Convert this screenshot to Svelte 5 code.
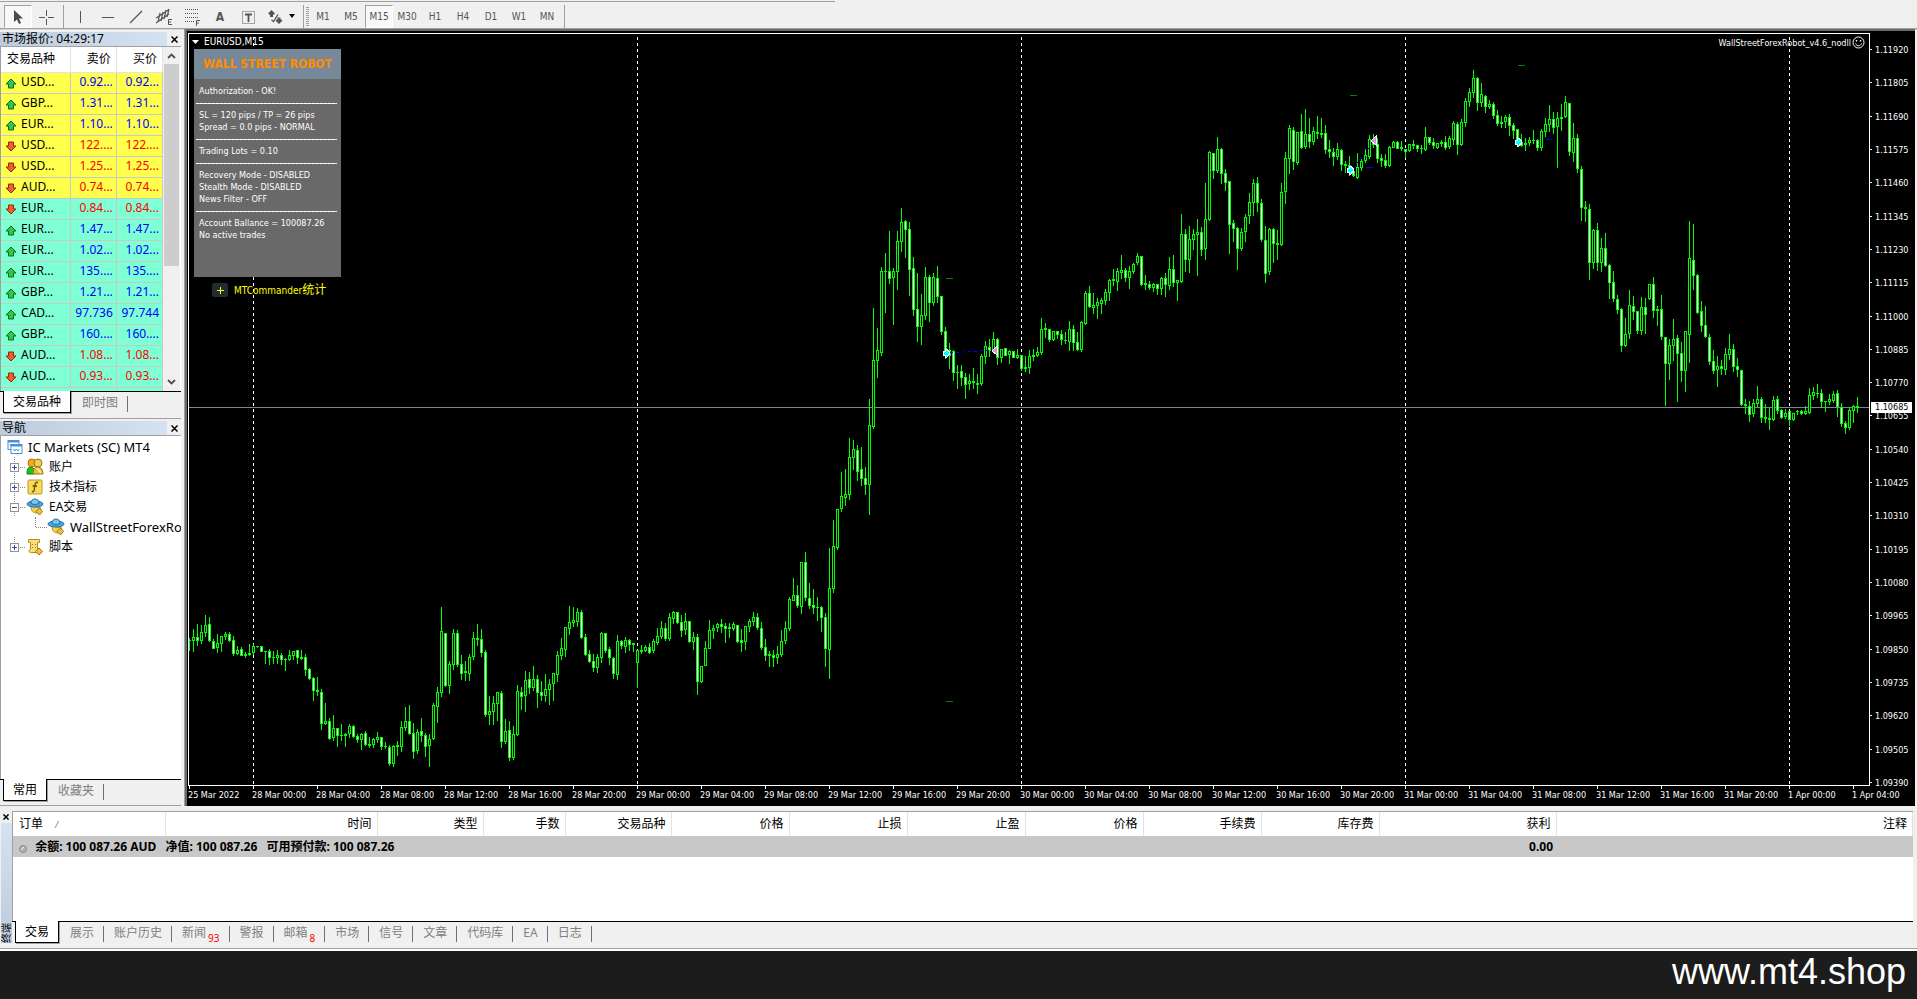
<script lang="ts">
  const timeframes = ['M1', 'M5', 'M15', 'M30', 'H1', 'H4', 'D1', 'W1', 'MN'];

  type Quote = { symbol: string; bid: string; ask: string; up: boolean; group: string };

  const quotes: Quote[] = [
    { symbol: 'USD...', bid: '0.92...', ask: '0.92...', up: true, group: 'yellow' },
    { symbol: 'GBP...', bid: '1.31...', ask: '1.31...', up: true, group: 'yellow' },
    { symbol: 'EUR...', bid: '1.10...', ask: '1.10...', up: true, group: 'yellow' },
    { symbol: 'USD...', bid: '122....', ask: '122....', up: false, group: 'yellow' },
    { symbol: 'USD...', bid: '1.25...', ask: '1.25...', up: false, group: 'yellow' },
    { symbol: 'AUD...', bid: '0.74...', ask: '0.74...', up: false, group: 'yellow' },
    { symbol: 'EUR...', bid: '0.84...', ask: '0.84...', up: false, group: 'aqua' },
    { symbol: 'EUR...', bid: '1.47...', ask: '1.47...', up: true, group: 'aqua' },
    { symbol: 'EUR...', bid: '1.02...', ask: '1.02...', up: true, group: 'aqua' },
    { symbol: 'EUR...', bid: '135....', ask: '135....', up: true, group: 'aqua' },
    { symbol: 'GBP...', bid: '1.21...', ask: '1.21...', up: true, group: 'aqua' },
    { symbol: 'CAD...', bid: '97.736', ask: '97.744', up: true, group: 'aqua' },
    { symbol: 'GBP...', bid: '160....', ask: '160....', up: true, group: 'aqua' },
    { symbol: 'AUD...', bid: '1.08...', ask: '1.08...', up: false, group: 'aqua' },
    { symbol: 'AUD...', bid: '0.93...', ask: '0.93...', up: false, group: 'aqua' }
  ];

  const treeItems = [
    { label: '账户', icon: 'accounts', box: '+' },
    { label: '技术指标', icon: 'indicator', box: '+' },
    { label: 'EA交易', icon: 'expert', box: '-' },
    { label: 'WallStreetForexRobot', icon: 'expert', box: '' },
    { label: '脚本', icon: 'script', box: '+' }
  ];

  // '-' draws a dashed rule between the groups
  const robotLines = [
    'Authorization - OK!',
    '-',
    'SL = 120 pips / TP = 26 pips',
    'Spread = 0.0 pips - NORMAL',
    '-',
    'Trading Lots = 0.10',
    '-',
    'Recovery Mode - DISABLED',
    'Stealth Mode - DISABLED',
    'News Filter - OFF',
    '-',
    'Account Ballance = 100087.26',
    'No active trades'
  ];

  const columns = ['订单', '时间', '类型', '手数', '交易品种', '价格', '止损', '止盈', '价格', '手续费', '库存费', '获利', '注释'];
  const columnWidths = [152, 212, 106, 82, 106, 118, 118, 118, 118, 118, 118, 177];

  const terminalTabs = [
    { label: '交易' },
    { label: '展示' },
    { label: '账户历史' },
    { label: '新闻', count: 93 },
    { label: '警报' },
    { label: '邮箱', count: 8 },
    { label: '市场' },
    { label: '信号' },
    { label: '文章' },
    { label: '代码库' },
    { label: 'EA' },
    { label: '日志' }
  ];

  const hours = ['00:00', '04:00', '08:00', '12:00', '16:00', '20:00'];
  const times = [
    '25 Mar 2022',
    ...['28 Mar', '29 Mar', '30 Mar', '31 Mar'].flatMap((day) => hours.map((hour) => `${day} ${hour}`)),
    '1 Apr 00:00',
    '1 Apr 04:00'
  ];

  const prices = Array.from({ length: 23 }, (_, n) => ((111920 - 115 * n) / 100000).toFixed(5));

  // Every bar is high, open, close, low, measured down from the top of the window
  const bars = `
638 640 640 650;629 640 637 651;624 637 640 645;625 640 632 643;615 632 625 636;617 624 640 641
639 641 648 648;634 647 643 652;636 643 636 651;632 636 634 639;632 634 640 641;636 640 653 655
646 653 650 654;647 649 655 655;652 655 654 657;644 654 653 655;644 652 646 654;646 646 646 647
646 646 651 651;651 651 651 663;649 651 657 664;651 657 657 663;650 657 655 663;653 655 659 664
658 659 659 670;650 659 655 660;651 655 651 659;650 650 657 663;650 657 658 659;654 657 669 675
668 669 678 679;677 678 690 700;677 690 691 695;689 692 723 729;703 723 721 724;718 721 738 739
715 737 728 740;728 728 735 746;724 735 735 740;733 735 734 746;724 733 726 737;725 726 736 737
734 736 739 742;733 739 734 749;731 733 744 745;737 744 745 747;738 744 739 747;732 739 737 742
737 737 746 749;742 746 746 748;745 747 763 765;745 763 746 766;741 746 745 755;721 746 727 751
707 727 721 730;705 721 733 734;723 733 751 758;729 750 732 753;718 731 735 741;733 735 746 756
734 745 739 766;703 738 705 739;687 706 692 722;607 692 631 696;633 633 685 686;661 685 664 693
629 664 633 669;630 633 664 666;655 664 673 679;661 671 672 680;654 673 657 680;632 656 638 659
624 638 639 645;629 639 652 656;650 652 714 716;696 714 711 724;696 711 703 724;692 703 692 720
691 693 741 747;719 741 731 743;721 730 757 760;726 757 734 759;685 734 691 735;687 692 696 709
671 695 680 711;672 679 687 693;666 687 679 690;675 679 692 707;681 692 695 700;674 695 689 701
679 689 684 704;673 683 673 700;651 674 655 681;638 655 648 659;627 649 627 656;606 628 622 634
607 622 620 626;608 621 612 626;610 612 637 638;634 637 654 655;650 654 661 662;654 661 667 671
654 667 657 672;632 657 633 662;633 633 650 652;647 649 657 664;657 658 673 678;635 674 641 679
640 641 645 648;637 646 640 652;639 640 644 650;643 643 644 651;650 662 650 687;645 650 651 653
645 650 647 651;643 647 652 653;639 650 641 652;628 642 636 644;621 636 628 638;623 628 638 640
613 638 617 640;611 618 612 623;612 612 622 623;615 622 630 636;613 629 621 634;621 621 641 642
632 641 637 649;634 637 681 694;666 681 666 682;641 665 648 665;620 648 630 648;625 630 628 638
623 627 624 631;619 624 626 632;623 626 628 642;623 628 627 637;622 628 624 630;625 625 641 642
629 640 642 651;626 641 626 649;619 626 621 631;612 621 617 625;613 617 627 629;622 628 647 649
639 647 655 660;651 654 655 666;650 655 657 666;646 657 654 663;630 654 641 656;621 640 628 643
597 628 599 630;578 600 595 600;585 595 605 607;562 606 562 613;552 562 597 600;583 598 605 608
589 605 607 613;597 607 607 620;606 607 617 631;613 617 648 666;548 649 588 678;520 588 546 592
509 547 509 549;472 508 496 511;469 497 494 505;438 494 457 499;440 457 449 469;445 450 471 480
447 469 478 485;467 478 484 494;399 484 425 514;308 426 360 428;328 360 350 377;267 352 271 355
253 271 271 312;231 271 278 283;268 277 271 324;231 271 241 289;208 241 222 251;220 221 229 257
222 229 269 295;257 268 309 315;273 309 326 341;294 326 315 344;267 315 277 319;275 277 302 321
273 302 277 305;266 278 296 302;296 296 331 334;327 331 355 358;343 355 350 368;350 351 372 380
365 372 372 388;365 371 377 385;373 377 384 398;374 383 381 389;368 381 382 388;374 383 384 393
354 383 356 385;341 356 346 363;339 347 350 356;332 350 339 352;338 339 357 364;349 357 349 362
348 348 355 355;350 354 351 363;351 351 357 357;349 357 355 358;355 355 368 370;356 368 367 371
350 367 356 373;349 356 355 360;347 355 352 356;318 352 329 354;323 328 329 337;329 329 339 341
331 339 331 340;331 331 334 338;330 334 339 344;332 340 340 343;321 341 329 350;325 329 342 350
332 342 349 350;321 349 322 351;291 323 293 324;286 293 306 307;293 307 305 313;298 305 302 318
298 303 300 313;289 300 292 304;279 292 280 300;269 280 279 285;268 281 271 290;255 272 270 278
268 270 277 281;266 277 271 288;263 271 264 273;253 262 256 264;256 256 284 285;275 283 284 289
281 284 287 289;283 287 284 291;284 284 288 294;277 288 278 294;273 278 284 296;257 285 269 289
255 269 282 286;280 282 280 300;214 281 234 282;229 234 259 271;226 259 239 272;229 239 234 249
219 234 232 275;227 232 249 255;183 248 219 259;151 219 152 220;153 153 170 178;137 170 149 172
148 149 173 183;169 173 182 190;181 181 224 253;220 223 228 241;227 228 248 269;228 248 232 250
214 231 217 241;193 215 202 223;179 202 183 215;177 183 202 211;199 203 239 241;226 240 273 282
228 271 229 274;228 229 243 262;230 243 244 259;183 244 192 245;152 191 158 203;125 158 128 173
127 130 161 169;132 162 132 164;114 131 147 148;109 146 134 148;118 134 141 147;127 141 131 144
116 132 133 138;118 133 134 137;125 133 149 153;140 149 151 157;148 152 156 165;143 156 149 159
149 150 164 170;161 164 165 172;156 165 171 175;166 171 175 176;153 177 167 178;159 167 161 170
149 160 155 162;135 156 139 158;134 139 144 147;138 144 158 162;154 158 160 166;154 160 165 167
146 165 147 166;141 147 142 147;141 142 148 148;141 147 148 150;149 149 151 157;144 150 144 151
140 144 145 148;145 145 148 151;145 148 148 153;127 149 137 150;137 137 142 144;138 142 145 148
143 147 143 148;140 143 142 146;136 142 147 149;136 146 138 148;121 139 123 144;122 124 144 154
119 144 122 145;98 122 101 126;88 101 92 106;70 92 78 97;77 78 102 110;83 102 94 106
95 96 106 112;100 106 104 108;102 104 115 118;110 115 123 125;116 122 123 127;115 121 117 127
114 117 125 135;123 125 130 138;129 129 144 146;134 142 145 146;138 144 143 150;137 142 140 145
130 140 140 143;139 140 147 150;129 147 131 150;118 131 124 136;105 124 119 131;112 119 127 133
112 126 118 167;104 118 117 130;96 116 102 117;103 103 151 155;123 152 138 161;134 138 168 172
166 169 207 220;201 207 208 221;204 209 262 279;229 262 230 268;223 230 262 270;238 262 248 271
233 248 265 266;264 265 282 298;271 282 298 301;295 299 309 313;308 309 345 351;318 345 334 346
290 333 305 338;296 306 311 319;311 311 330 333;297 330 307 334;298 307 314 333;284 298 284 299
277 284 310 317;306 309 310 325;295 309 336 339;337 337 363 405;339 363 345 379;319 345 339 360
335 338 353 401;342 353 370 381;331 370 331 391;221 334 258 362;224 260 275 289;274 275 312 313
301 311 325 331;306 325 336 337;334 337 361 364;350 361 370 373;356 369 366 386;360 366 368 374
348 369 354 374;334 354 349 359;344 349 366 371;358 366 369 376;370 370 404 405;399 404 405 413
401 406 414 421;399 413 403 416;386 403 399 406;397 399 417 422;404 417 418 422;408 418 419 429
396 419 400 420;396 399 410 413;409 410 417 418;409 416 413 418;411 411 419 425;413 419 413 420
410 411 411 414;410 411 413 414;406 413 411 414;388 412 395 413;387 395 392 399;384 393 393 397
389 393 401 407;401 401 401 411;394 401 399 404;391 400 394 402;390 393 406 416;403 407 423 426
421 423 427 433;407 427 410 429;405 410 406 422;397 406 407 412`
    .trim()
    .split(/[;\n]/)
    .map((bar) => bar.split(' ').map(Number));

  const BAR_STEP = 4;
  const PLOT_TOP = 34;

  let outline = '';
  let bullFill = '';
  let bearFill = '';

  bars.forEach(([high, open, close, low], i) => {
    const x = i * BAR_STEP;
    const top = Math.min(open, close) - PLOT_TOP;
    const height = Math.abs(open - close) + 1;
    outline += `M${x} ${high - PLOT_TOP}h1v${low - high + 1}h-1z`;
    outline += `M${x - 1} ${top}h3v${height}h-3z`;
    if (height > 2) {
      const inner = `M${x} ${top + 1}h1v${height - 2}h-1z`;
      if (close > open) bearFill += inner;
      else bullFill += inner;
    }
  });

  const daySeparators = [64, 448, 832, 1216, 1600];
  const buys = [[757, 319], [1161, 136], [1329, 108]];
  const sells = [[806, 316], [1185, 106]];
  const targets = [[757, 244], [1161, 61], [1329, 31], [757, 667]];
  const stops = [[1177, 133], [1357, 105]];
</script>

{#snippet treeIcon(name: string)}
  <svg class="tree-icon" width="18" height="18" viewBox="0 0 18 18" aria-hidden="true">
    {#if name === 'accounts'}
      <path d="M1 16c0-5 1-7 4-7 2 0 3 2 3 4v3z" fill="#18c818" stroke="#0c7c10" />
      <circle cx="6" cy="5" r="4" fill="#f5a81c" stroke="#a8730c" />
      <path d="M7 16c0-5 2-7 5-7s5 3 5 7z" fill="#e3bf3a" stroke="#96760e" />
      <circle cx="12" cy="5" r="4" fill="#edcf55" stroke="#96760e" />
      <path d="M11 10l4 5" stroke="#fff3b0" stroke-width="1.5" />
    {:else if name === 'indicator'}
      <rect x="2" y="2" width="14" height="14" rx="1" fill="#f7d95c" stroke="#c09a20" />
      <path d="M12 4.500c-2-.8-2.700.4-3 2.500l-.8 5c-.3 1.700-1 2-2.200 1.500M6.500 8H11" fill="none" stroke="#6b5200" stroke-width="1.400" />
    {:else if name === 'script'}
      <path d="M2.500 1.500h11v3h-2v7h2v3h-9c-2 0-2-3 0-3v-7h-2z" fill="#f7dd78" stroke="#b48f1e" />
      <path d="M6 6.500h1M9 6.500h1M6 9.500h1M9 9.500h1" stroke="#a07f1a" />
      <path d="M13 10l3.500 3.500L13 17l-3.500-3.500z" fill="#efc23c" stroke="#9c7410" />
    {:else}
      <path d="M5 8c0 5 2 7 6 7l4-5z" fill="#f3cf52" stroke="#b8901e" />
      <ellipse cx="9" cy="6" rx="8" ry="3" fill="#4ba7dc" stroke="#1e6fa6" />
      <path d="M5 5.500c0-3 1.500-4.500 4-4.500s4 1.500 4 4.500c-2 1.200-6 1.200-8 0z" fill="#7cc6ee" stroke="#1e6fa6" />
      <path d="M13.500 10l3 3.500-3 3.500-3.500-3.500z" fill="#efc23c" stroke="#9c7410" />
    {/if}
  </svg>
{/snippet}

<div class="app">
  <header class="toolbar">
    <button class="tool active" aria-label="Cursor">
      <svg width="18" height="18" viewBox="0 0 18 18"><path d="M5 2v12l3-2.500L10 16l2-1-2-4.500h4z" fill="#4a4a4a" /></svg>
    </button>
    <button class="tool" aria-label="Crosshair">
      <svg width="18" height="18" viewBox="0 0 18 18"><path d="M9.500 2v6M9.500 11v6M2 9.500h6M11 9.500h6" stroke="#555" /></svg>
    </button>
    <span class="separator"></span>
    <button class="tool" aria-label="Vertical line">
      <svg width="18" height="18" viewBox="0 0 18 18"><path d="M9.500 3v12" stroke="#555" /></svg>
    </button>
    <button class="tool" aria-label="Horizontal line">
      <svg width="18" height="18" viewBox="0 0 18 18"><path d="M3 9.500h12" stroke="#555" /></svg>
    </button>
    <button class="tool" aria-label="Trendline">
      <svg width="18" height="18" viewBox="0 0 18 18"><path d="M3 15L15 3" stroke="#555" stroke-width="1.200" /></svg>
    </button>
    <button class="tool" aria-label="Equidistant channel">
      <svg width="18" height="18" viewBox="0 0 18 18" fill="none" stroke="#555">
        <path d="M1 10L14 1.500M1 15L14 6M5 5L3 14M8 4L6 13M11 2L9 11M14 1l-2 8" stroke-width="1.200" />
        <path d="M17 11.500h-3.500v5H17M13.500 14H16" />
      </svg>
    </button>
    <button class="tool" aria-label="Fibonacci retracement">
      <svg width="18" height="18" viewBox="0 0 18 18" fill="none" stroke="#555">
        <path d="M2 1.500h14M2 5.500h14M2 9.500h14M2 13.500h9" stroke-dasharray="1 1" />
        <path d="M17 12.500h-3.500V18M13.500 15H16" />
      </svg>
    </button>
    <button class="tool letter" aria-label="Text">A</button>
    <button class="tool" aria-label="Text label">
      <svg width="18" height="18" viewBox="0 0 18 18" fill="none" stroke="#555">
        <rect x="3.500" y="3.500" width="12" height="12" stroke-dasharray="1 1" />
        <path d="M6 6.500h7M9.500 6v8" stroke-width="1.800" />
      </svg>
    </button>
    <button class="tool wide" aria-label="Arrows">
      <svg width="18" height="18" viewBox="0 0 18 18">
        <path d="M5.500 2L9 5.500 7 7v2H4V7L2 5.500zM13 16l-3.500-3.500 2-1.500V9.500h3V11l2 1.500z" fill="#555" />
        <path d="M5.500 12l2 1.500L12 6.500" fill="none" stroke="#555" stroke-width="1.300" />
      </svg>
      <svg width="8" height="5" viewBox="0 0 8 5"><path d="M1 0h6L4 4z" fill="#000" /></svg>
    </button>
    <span class="separator"></span>
    <span class="grip"></span>
    {#each timeframes as frame}
      <button class="tool" class:active={frame === 'M15'}>{frame}</button>
    {/each}
    <span class="separator"></span>
  </header>

  <div class="workspace">
    <aside class="sidebar">
      <section class="market">
        <div class="title-bar">
          <h2>市场报价: 04:29:17</h2>
          <button class="close" aria-label="Close market watch">
            <svg width="7" height="7" viewBox="0 0 7 7"><path d="M.5.5l6 6M6.500.5l-6 6" stroke="#000" stroke-width="1.500" /></svg>
          </button>
        </div>
        <div class="market-body">
          <table class="quotes">
            <thead>
              <tr><th>交易品种</th><th>卖价</th><th>买价</th></tr>
            </thead>
            <tbody>
              {#each quotes as quote}
                <tr class={quote.group} class:up={quote.up}>
                  <td>
                    <svg class:flip={!quote.up} width="12" height="11" viewBox="0 0 12 11" aria-hidden="true">
                      <path
                        d="M6 1l5 5H8.500v4h-5V6H1z"
                        fill={quote.up ? '#2fc84a' : '#f0602c'}
                        stroke={quote.up ? '#0a6b1c' : '#98240a'}
                      />
                    </svg>
                    {quote.symbol}
                  </td>
                  <td>{quote.bid}</td>
                  <td>{quote.ask}</td>
                </tr>
              {/each}
              <tr class="aqua"><td></td><td></td><td></td></tr>
            </tbody>
          </table>
          <div class="scrollbar">
            <svg width="9" height="6" viewBox="0 0 9 6"><path d="M1 5l3.500-3.500L8 5" fill="none" stroke="#505050" stroke-width="1.800" /></svg>
            <span class="thumb"></span>
            <svg width="9" height="6" viewBox="0 0 9 6"><path d="M1 1l3.500 3.500L8 1" fill="none" stroke="#505050" stroke-width="1.800" /></svg>
          </div>
        </div>
        <nav class="tabs">
          <button class="tab selected">交易品种</button>
          <button class="tab">即时图</button>
        </nav>
      </section>

      <section class="navigator">
        <div class="title-bar">
          <h2>导航</h2>
          <button class="close" aria-label="Close navigator">
            <svg width="7" height="7" viewBox="0 0 7 7"><path d="M.5.5l6 6M6.500.5l-6 6" stroke="#000" stroke-width="1.500" /></svg>
          </button>
        </div>
        <ul class="tree">
          <li class="root">
            <svg width="16" height="16" viewBox="0 0 16 16" aria-hidden="true">
              <rect x="1" y="1.500" width="11" height="9" fill="#fff" stroke="#4a90d9" />
              <path d="M1 2.500h11" stroke="#4a90d9" stroke-width="2" />
              <path d="M3 7l1-2 2 2" fill="none" stroke="#4a90d9" />
              <rect x="4" y="5.500" width="11" height="9" fill="#fff" stroke="#4a90d9" />
              <path d="M4 6.500h11" stroke="#4a90d9" stroke-width="2" />
              <path d="M6 10l2 2 1-2 2 2 1-2" fill="none" stroke="#4a90d9" />
            </svg>
            IC Markets (SC) MT4
          </li>
          {#each treeItems as item}
            <li class:child={!item.box} class:last={item.label === '脚本'}>
              <span class="branch">
                {#if item.box}
                  <svg width="9" height="9" viewBox="0 0 9 9" aria-hidden="true">
                    <rect x=".5" y=".5" width="8" height="8" fill="#fff" stroke="#919191" />
                    <path d={item.box === '+' ? 'M2 4.500h5M4.500 2v5' : 'M2 4.500h5'} stroke="#2b4f9e" />
                  </svg>
                {/if}
              </span>
              {@render treeIcon(item.icon)}
              <span>{item.label}</span>
            </li>
          {/each}
        </ul>
        <nav class="tabs">
          <button class="tab selected">常用</button>
          <button class="tab">收藏夹</button>
        </nav>
      </section>
    </aside>

    <main class="chart">
      <div class="plot">
        <svg class="candles" shape-rendering="crispEdges" aria-hidden="true">
          {#each daySeparators as x}
            <path d="M{x + 0.5} 3V752" stroke="#fff" stroke-dasharray="3 3" />
          {/each}
          <path d="M0 373.500H1680" stroke="#778899" />
          <path d={outline} fill="#00ff00" />
          <path d={bullFill} fill="#000" />
          <path d={bearFill} fill="#fff" />
          <path d="M761 319L802 316M1163 135L1183 110" stroke="#0000ff" stroke-dasharray="3 3" />
          {#each targets as [x, y]}
            <rect {x} {y} width="7" height="1" fill="#008000" />
          {/each}
          {#each stops as [x, y]}
            <rect {x} {y} width="7" height="1" fill="#0000ff" />
          {/each}
          {#each buys as [x, y]}
            <path d="M{x - 3} {y - 2}h2v-2h2l3 4-3 4h-2v-2h-2z" fill="#00ffff" stroke="#fff" />
          {/each}
          {#each sells as [x, y]}
            <path d="M{x + 2} {y - 4}v9l-5-4z" fill="#ee82ee" stroke="#fff" />
          {/each}
        </svg>

        <div class="chart-title">
          <svg width="7" height="4" viewBox="0 0 7 4" aria-hidden="true"><path d="M0 0h7L3.500 4z" fill="#fff" /></svg>
          EURUSD,M15
        </div>

        <div class="expert-name">
          WallStreetForexRobot_v4.6_nodll
          <svg width="13" height="13" viewBox="0 0 13 13" fill="none" stroke="#fff" aria-hidden="true">
            <circle cx="6.500" cy="6.500" r="5.500" />
            <path d="M3.500 7.500c1 3 5 3 6 0" />
            <path d="M4.500 4v1.500M8.500 4v1.500" stroke-width="1.400" />
          </svg>
        </div>

        <div class="robot">
          <h3>WALL STREET ROBOT</h3>
          <div class="robot-body">
            {#each robotLines as line}
              {#if line === '-'}
                <hr />
              {:else}
                <p>{line}</p>
              {/if}
            {/each}
          </div>
        </div>

        <div class="commander">
          <button aria-label="Expand statistics">
            <svg width="7" height="7" viewBox="0 0 7 7"><path d="M0 3.500h7M3.500 0v7" stroke="#ffff00" /></svg>
          </button>
          <span>MTCommander<b>统计</b></span>
        </div>
      </div>

      <div class="price-axis">
        {#each prices as price}
          <span>{price}</span>
        {/each}
        <strong>1.10685</strong>
      </div>

      <div class="time-axis">
        {#each times as time}
          <span>{time}</span>
        {/each}
      </div>
    </main>
  </div>

  <section class="terminal">
    <div class="terminal-side">
      <button class="close" aria-label="Close terminal">
        <svg width="6" height="6" viewBox="0 0 7 7"><path d="M.5.5l6 6M6.500.5l-6 6" stroke="#000" stroke-width="1.700" /></svg>
      </button>
      <div class="terminal-title"><span>终端</span></div>
    </div>
    <div class="terminal-main">
      <div class="terminal-body">
        <table class="orders">
          <colgroup>
            {#each columnWidths as width}
              <col style="width: {width}px" />
            {/each}
            <col />
          </colgroup>
          <thead>
            <tr>
              {#each columns as column, i}
                <th>{column}{#if i === 0}<i>/</i>{/if}</th>
              {/each}
            </tr>
          </thead>
          <tbody>
            <tr>
              <td colspan="11">
                <svg width="8" height="8" viewBox="0 0 8 8" aria-hidden="true">
                  <circle cx="4" cy="4" r="3.500" fill="#b4b4b4" stroke="#888" />
                  <path d="M2 5l3-3" stroke="#eee" />
                </svg>
                <span>余额: 100 087.26 AUD</span>
                <span>净值: 100 087.26</span>
                <span>可用预付款: 100 087.26</span>
              </td>
              <td>0.00</td>
              <td></td>
            </tr>
          </tbody>
        </table>
      </div>
      <nav class="tabs">
        {#each terminalTabs as tab, i}
          <button class="tab" class:selected={i === 0}>{tab.label}{#if tab.count}<sub>{tab.count}</sub>{/if}</button>
        {/each}
      </nav>
    </div>
  </section>

  <footer>www.mt4.shop</footer>
</div>

<style>
  :global(body) {
    background: #f0f0f0;
  }

  .app {
    display: flex;
    flex-direction: column;
    height: 100vh;
    overflow: hidden;
    background: #f0f0f0;
    color: #000;
    font: 12px/16px 'Noto Sans', 'Noto Sans CJK SC', sans-serif;
  }

  button {
    display: flex;
    align-items: center;
    justify-content: center;
    padding: 0;
    border: none;
    background: none;
    color: inherit;
    font: inherit;
  }

  h2,
  h3,
  p,
  ul {
    margin: 0;
    padding: 0;
  }

  table {
    border-collapse: collapse;
    table-layout: fixed;
  }

  /* Toolbar */
  .toolbar {
    display: flex;
    align-items: center;
    flex: none;
    box-sizing: border-box;
    height: 29px;
    padding: 5px 4px 0;
    border-bottom: 1px solid #a0a0a0;
    background: linear-gradient(#a0a0a0, #a0a0a0) 0 1px / 835px 1px no-repeat;
    box-shadow: 0 1px #d8d8d8;
  }

  .tool {
    box-sizing: border-box;
    width: 28px;
    height: 23px;
    color: #555;
    font: 10px/16px 'DejaVu Sans Condensed', 'DejaVu Sans', sans-serif;
  }

  .tool.active {
    border: 1px solid #a0a0a0;
    border-right-color: #fff;
    border-bottom-color: #fff;
    background: #f8f8f8;
  }

  .tool.letter {
    font-size: 12px;
    font-weight: bold;
  }

  .tool.wide {
    gap: 4px;
    width: 38px;
  }

  .separator {
    width: 1px;
    height: 23px;
    margin: 0 2px 0 3px;
    background: #a0a0a0;
  }

  .grip {
    width: 3px;
    height: 19px;
    background: repeating-linear-gradient(#a0a0a0 0 1px, transparent 1px 2px);
  }

  /* Sidebar */
  .workspace {
    display: flex;
    flex: 1;
    min-height: 0;
  }

  .sidebar {
    display: flex;
    flex-direction: column;
    flex: none;
    box-sizing: border-box;
    width: 185px;
    padding-right: 3px;
    border-right: 1px solid #a0a0a0;
  }

  .title-bar {
    display: flex;
    height: 14px;
    margin-top: 2px;
    border-bottom: 1px solid #a0a0a0;
  }

  .title-bar h2 {
    width: 165px;
    padding-left: 2px;
    background: linear-gradient(90deg, #bccbdc, #d5e2f1);
    font-size: 12px;
    font-weight: normal;
    line-height: 14px;
  }

  .close {
    flex: 1;
  }

  .market {
    padding: 1px 0 5px;
    border-bottom: 1px solid #a0a0a0;
  }

  .market-body {
    display: flex;
    height: 344px;
    overflow: hidden;
    border-left: 1px solid #a0a0a0;
    background: #fff;
  }

  .quotes {
    width: 162px;
    height: 1px;
  }

  .quotes th,
  .quotes td {
    box-sizing: border-box;
    height: 21px;
    padding: 0 3px 0 0;
    border-right: 1px solid #c8c8c8;
    border-bottom: 1px solid #c8c8c8;
    text-align: right;
    line-height: 18px;
  }

  .quotes th {
    width: 46px;
    height: 25px;
    padding-right: 5px;
    border-color: #e3e3e3;
    font-weight: normal;
  }

  .quotes th:first-child {
    width: 69px;
    padding-left: 6px;
    text-align: left;
  }

  .quotes tbody td {
    padding-bottom: 2px;
    color: #ff0000;
  }

  .quotes tbody .up td {
    color: #0000ff;
  }

  .quotes tbody td:first-child {
    padding-left: 4px;
    color: #000;
    text-align: left;
    white-space: nowrap;
  }

  .quotes td svg {
    margin-right: 1px;
    vertical-align: -3px;
  }

  .quotes .flip {
    transform: scaleY(-1);
  }

  .yellow {
    background: #ffff4d;
  }

  .aqua {
    background: #7fffd4;
  }

  .scrollbar {
    display: flex;
    flex-direction: column;
    align-items: center;
    flex: none;
    width: 17px;
    padding: 6px 0;
    background: #f0f0f0;
  }

  .thumb {
    width: 15px;
    height: 202px;
    margin: 5px 0 auto;
    background: #cdcdcd;
  }

  .navigator {
    display: flex;
    flex-direction: column;
    flex: 1;
    min-height: 0;
    padding-bottom: 4px;
    border-bottom: 1px solid #a0a0a0;
  }

  .tree {
    flex: 1;
    overflow: hidden;
    padding-top: 1px;
    border-left: 1px solid #a0a0a0;
    background: #fff;
    list-style: none;
  }

  .tree li {
    display: flex;
    align-items: center;
    height: 20px;
    padding-left: 13px;
    background: repeating-linear-gradient(#888 0 1px, transparent 1px 2px) 13px 0 / 1px 100% no-repeat;
    font-size: 12px;
    white-space: nowrap;
  }

  .tree .root {
    gap: 5px;
    padding-left: 6px;
    background: none;
    font-size: 13px;
  }

  .tree .last {
    background-size: 1px 10px;
  }

  .tree .child {
    padding-left: 34px;
    background: none;
    font-size: 13px;
  }

  .branch {
    display: flex;
    align-items: center;
    flex: none;
    box-sizing: border-box;
    width: 12px;
    height: 20px;
    background: repeating-linear-gradient(90deg, #888 0 1px, transparent 1px 2px) 0 10px / 100% 1px no-repeat;
  }

  .branch svg {
    flex: none;
    margin-left: -4px;
  }

  .child .branch {
    border-left: 1px dotted #888;
    clip-path: inset(0 0 9px 0);
  }

  .tree-icon {
    flex: none;
    margin-right: 5px;
  }

  /* Tabs */
  .tabs {
    display: flex;
    height: 21px;
    padding-left: 3px;
    border-top: 1px solid #000;
  }

  .tab {
    position: relative;
    padding: 0 10px;
    color: #808080;
    font-size: 12px;
    line-height: 20px;
  }

  .tab:not(.selected)::after {
    content: '';
    position: absolute;
    top: 4px;
    right: 0;
    width: 1px;
    height: 16px;
    background: #707070;
  }

  .tab.selected {
    margin: -1px 1px 0 0;
    padding: 0 9px;
    border: solid #000;
    border-width: 0 1px 1px;
    background: #fff;
    box-shadow: 1px 1px #a0a0a0;
    color: #000;
  }

  .tab sub {
    margin: 10px 0 0 2px;
    color: #ff0000;
    font-size: 10px;
    line-height: 10px;
  }

  /* Chart */
  .chart {
    display: grid;
    grid-template: 1fr 20px / 1fr 45px;
    flex: 1;
    min-width: 0;
    overflow: hidden;
    margin-right: 2px;
    padding: 2px 0 0 1px;
    border-top: 2px solid #696969;
    border-left: 2px solid #696969;
    background: #000;
    color: #fff;
    font: 9px/12px 'DejaVu Sans Condensed', 'DejaVu Sans', 'Noto Sans CJK SC', sans-serif;
  }

  .plot {
    position: relative;
    min-width: 0;
    border: 1px solid #fff;
  }

  .candles {
    position: absolute;
    width: 100%;
    height: 100%;
  }

  .chart-title,
  .expert-name,
  .robot,
  .commander {
    position: absolute;
  }

  .chart-title {
    display: flex;
    align-items: center;
    gap: 5px;
    top: 2px;
    left: 3px;
    font-size: 10px;
  }

  .expert-name {
    display: flex;
    align-items: center;
    gap: 1px;
    top: 2px;
    right: 4px;
  }

  .robot {
    top: 15px;
    left: 5px;
    width: 147px;
    height: 228px;
    background: #696969;
  }

  .robot h3 {
    background: #778899;
    color: #ff8c00;
    font-size: 12px;
    line-height: 30px;
    text-align: center;
    white-space: nowrap;
  }

  .robot-body {
    padding: 6px 4px 0 2px;
  }

  .robot p {
    padding-left: 3px;
    white-space: nowrap;
  }

  .robot hr {
    height: 1px;
    margin: 6px 0 5px;
    border: none;
    background: repeating-linear-gradient(90deg, #fff 0 3px, #ddd 3px 4px);
  }

  .commander {
    display: flex;
    align-items: center;
    gap: 6px;
    top: 249px;
    left: 23px;
    color: #ffff00;
    font-size: 10px;
  }

  .commander button {
    width: 16px;
    height: 14px;
    border-radius: 2px;
    background: #232b33;
  }

  .commander b {
    font-size: 12px;
    font-weight: normal;
  }

  .price-axis {
    position: relative;
    display: flex;
    flex-direction: column;
    justify-content: space-between;
    padding: 11px 0 0;
    margin-bottom: -3px;
  }

  .price-axis span::before {
    content: '';
    display: inline-block;
    width: 2px;
    height: 1px;
    margin-right: 3px;
    background: #fff;
    vertical-align: 3px;
  }

  .price-axis strong {
    position: absolute;
    top: 369px;
    left: 1px;
    width: 37px;
    padding-left: 4px;
    background: #fff;
    color: #000;
    font-weight: normal;
    line-height: 11px;
  }

  .time-axis {
    display: flex;
    grid-column: span 2;
  }

  .time-axis span {
    flex: none;
    width: 64px;
    padding-top: 3px;
    background: linear-gradient(#fff, #fff) 1px 0 / 1px 3px no-repeat;
    white-space: nowrap;
  }

  /* Terminal */
  .terminal {
    display: flex;
    flex: none;
    padding: 5px 4px 5px 0;
    border-bottom: 1px solid #a0a0a0;
    box-shadow: 0 2px #fff;
  }

  .terminal-side {
    display: flex;
    flex-direction: column;
    align-items: center;
    flex: none;
    width: 12px;
  }

  .terminal-side .close {
    flex: none;
    width: 8px;
    height: 12px;
  }

  .terminal-title {
    display: flex;
    align-items: flex-end;
    flex: 1;
    background: linear-gradient(#d5e2f1, #bccbdc);
  }

  .terminal-title span {
    font-size: 10px;
    line-height: 11px;
    text-orientation: sideways;
    transform: rotate(180deg);
    writing-mode: vertical-rl;
  }

  .terminal-main {
    flex: 1;
    min-width: 0;
  }

  .terminal-body {
    height: 109px;
    border-top: 1px solid #a0a0a0;
    border-left: 1px solid #a0a0a0;
    background: #fff;
  }

  .orders {
    width: 100%;
  }

  .orders th {
    box-sizing: border-box;
    height: 24px;
    padding: 0 5px;
    border-right: 1px solid #e3e3e3;
    font-weight: normal;
    text-align: right;
  }

  .orders th:first-child {
    padding-left: 6px;
    text-align: left;
  }

  .orders th i {
    margin-left: 12px;
    color: #808080;
    font-size: 9px;
  }

  .orders td {
    height: 21px;
    padding: 0 3px 0 6px;
    background: #c8c8c8;
    font-weight: bold;
    text-align: right;
  }

  .orders td:first-child {
    text-align: left;
  }

  .orders td span {
    margin-right: 6px;
  }

  .orders td svg {
    margin-right: 5px;
    vertical-align: -2px;
  }

  footer {
    flex: none;
    box-sizing: border-box;
    height: 48px;
    margin-top: 2px;
    padding: 1px 11px 0 0;
    background: #1c1c1c;
    color: #fff;
    font: 36px/40px 'Liberation Sans', Arial, sans-serif;
    text-align: right;
  }
</style>
